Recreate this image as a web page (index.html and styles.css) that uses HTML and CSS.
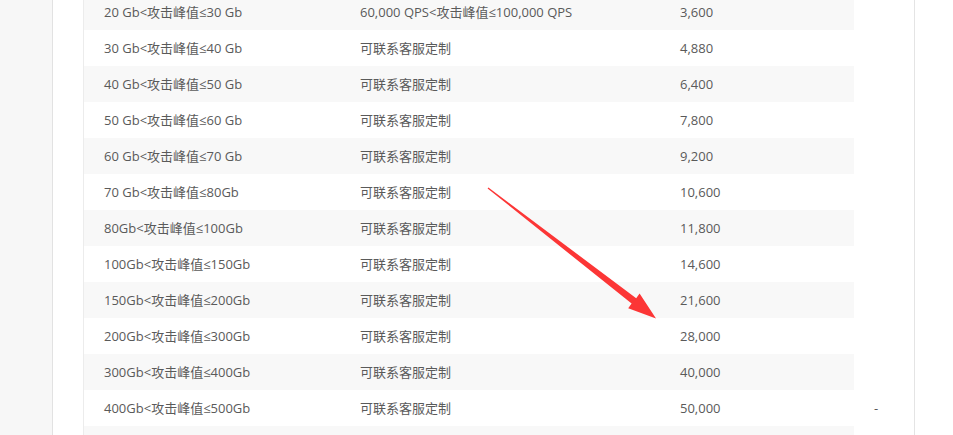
FILE: index.html
```html
<!DOCTYPE html>
<html lang="zh-CN">
<head>
<meta charset="utf-8">
<link rel="stylesheet" href="styles.css">
</head>
<body>
<div class="page">
  <div class="card">
    <div class="panel">
      <table class="price">
        <colgroup>
          <col class="c1"><col class="c2"><col class="c3"><col class="c4">
        </colgroup>
        <tbody>
          <tr><td>20 Gb&lt;攻击峰值≤30 Gb</td><td>60,000 QPS&lt;攻击峰值≤100,000 QPS</td><td>3,600</td><td class="extra"></td></tr>
          <tr><td>30 Gb&lt;攻击峰值≤40 Gb</td><td>可联系客服定制</td><td>4,880</td><td class="extra"></td></tr>
          <tr><td>40 Gb&lt;攻击峰值≤50 Gb</td><td>可联系客服定制</td><td>6,400</td><td class="extra"></td></tr>
          <tr><td>50 Gb&lt;攻击峰值≤60 Gb</td><td>可联系客服定制</td><td>7,800</td><td class="extra"></td></tr>
          <tr><td>60 Gb&lt;攻击峰值≤70 Gb</td><td>可联系客服定制</td><td>9,200</td><td class="extra"></td></tr>
          <tr><td>70 Gb&lt;攻击峰值≤80Gb</td><td>可联系客服定制</td><td>10,600</td><td class="extra"></td></tr>
          <tr><td>80Gb&lt;攻击峰值≤100Gb</td><td>可联系客服定制</td><td>11,800</td><td class="extra"></td></tr>
          <tr><td>100Gb&lt;攻击峰值≤150Gb</td><td>可联系客服定制</td><td>14,600</td><td class="extra"></td></tr>
          <tr><td>150Gb&lt;攻击峰值≤200Gb</td><td>可联系客服定制</td><td>21,600</td><td class="extra"></td></tr>
          <tr><td>200Gb&lt;攻击峰值≤300Gb</td><td>可联系客服定制</td><td>28,000</td><td class="extra"></td></tr>
          <tr><td>300Gb&lt;攻击峰值≤400Gb</td><td>可联系客服定制</td><td>40,000</td><td class="extra"></td></tr>
          <tr><td>400Gb&lt;攻击峰值≤500Gb</td><td>可联系客服定制</td><td>50,000</td><td class="extra">-</td></tr>
          <tr><td></td><td></td><td></td><td class="extra"></td></tr>
        </tbody>
      </table>
    </div>
  </div>
  <svg class="arrow" width="953" height="435" viewBox="0 0 953 435">
    <polygon fill="#fc3636" points="487.6,188.4 631.6,303.6 628.2,308.2 656,318.5 639.6,293.6 636.2,298.2 488.4,187.6"/>
  </svg>
</div>
</body>
</html>
```
FILE: styles.css
```css
html, body {
  margin: 0;
  padding: 0;
  background: #f7f7f7;
  overflow: hidden;
}
.page {
  position: relative;
  width: 953px;
  height: 435px;
  overflow: hidden;
}
.card {
  margin-left: 52px;
  width: 891px;
  height: 435px;
  background: #fff;
  border-left: 1px solid #e2e2e2;
  border-right: 1px solid #dcdcdc;
  padding-left: 30px;
  box-sizing: content-box;
}
.panel {
  width: 830px;
  height: 435px;
  border-left: 1px solid #ececec;
  border-right: 1px solid #e4e4e4;
  overflow: hidden;
}
.price {
  border-collapse: collapse;
  table-layout: fixed;
  width: 830px;
  margin-top: -6px;
  font-family: "Open Sans", "Noto Sans CJK SC", sans-serif;
  font-size: 13px;
  color: #5a5a5a;
}
.c1 { width: 256px; }
.c2 { width: 320px; }
.c3 { width: 194px; }
.c4 { width: 60px; }
.price td {
  height: 36px;
  padding: 0 0 0 20px;
  white-space: nowrap;
  vertical-align: middle;
  box-sizing: border-box;
  line-height: 18px;
}
.price tr:nth-child(odd) td:not(.extra) {
  background: #f8f8f8;
}
.price td.extra {
  background: #fff;
  padding-left: 20px;
}
.arrow {
  position: absolute;
  left: 0;
  top: 0;
  pointer-events: none;
}
```
